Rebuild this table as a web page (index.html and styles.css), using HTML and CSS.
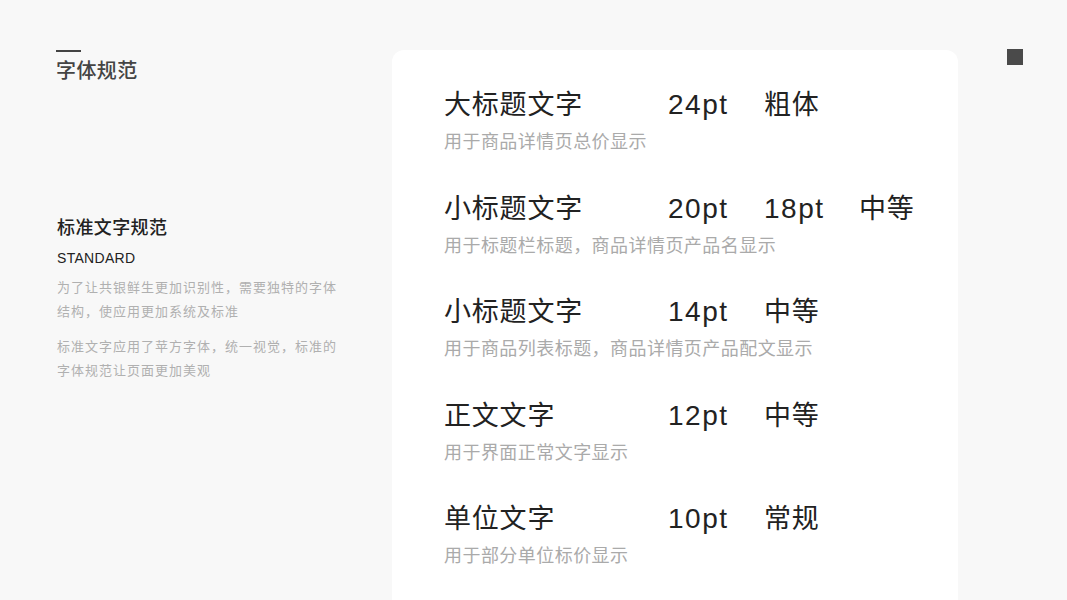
FILE: index.html
```html
<!DOCTYPE html>
<html lang="zh-CN">
<head>
<meta charset="utf-8">
<title>字体规范</title>
<link rel="stylesheet" href="styles.css">
</head>
<body>
<div class="page">
  <aside class="left">
    <div class="dash"></div>
    <h1 class="page-title">字体规范</h1>
    <h2 class="sec-title">标准文字规范</h2>
    <div class="sec-en">STANDARD</div>
    <p class="desc">为了让共银鲜生更加识别性，需要独特的字体结构，使应用更加系统及标准</p>
    <p class="desc">标准文字应用了苹方字体，统一视觉，标准的字体规范让页面更加美观</p>
  </aside>
  <main class="card">
    <div class="row">
      <div class="line">
        <span class="name">大标题文字</span>
        <span class="num">24pt</span>
        <span class="cell">粗体</span>
      </div>
      <div class="note">用于商品详情页总价显示</div>
    </div>
    <div class="row">
      <div class="line">
        <span class="name">小标题文字</span>
        <span class="num">20pt</span>
        <span class="num">18pt</span>
        <span class="cell">中等</span>
      </div>
      <div class="note">用于标题栏标题，商品详情页产品名显示</div>
    </div>
    <div class="row">
      <div class="line">
        <span class="name">小标题文字</span>
        <span class="num">14pt</span>
        <span class="cell">中等</span>
      </div>
      <div class="note">用于商品列表标题，商品详情页产品配文显示</div>
    </div>
    <div class="row">
      <div class="line">
        <span class="name">正文文字</span>
        <span class="num">12pt</span>
        <span class="cell">中等</span>
      </div>
      <div class="note">用于界面正常文字显示</div>
    </div>
    <div class="row">
      <div class="line">
        <span class="name">单位文字</span>
        <span class="num">10pt</span>
        <span class="cell">常规</span>
      </div>
      <div class="note">用于部分单位标价显示</div>
    </div>
  </main>
  <div class="corner">
    <div class="square"></div>
  </div>
</div>
</body>
</html>
```

FILE: styles.css
```css
* { box-sizing: border-box; }
html, body {
  margin: 0;
  padding: 0;
  height: 100%;
  overflow: hidden;
}
body {
  background: #f8f8f8;
  font-family: "Liberation Sans", "Noto Sans CJK SC", sans-serif;
  color: #222;
}
.page {
  display: flex;
  align-items: flex-start;
  padding-top: 49px;
  height: 600px;
}
.left {
  width: 392px;
  padding-left: 56px;
  flex: none;
}
.dash {
  width: 25px;
  height: 2px;
  margin-top: 1px;
  background: #444;
}
.page-title {
  margin: 5px 0 0;
  font-size: 20px;
  line-height: 28px;
  font-weight: 500;
  color: #444;
  letter-spacing: 0.4px;
}
.sec-title {
  margin: 130px 0 0 1px;
  font-size: 18px;
  line-height: 26px;
  font-weight: 500;
  color: #222;
  letter-spacing: 0.4px;
}
.sec-en {
  margin: 7px 0 0 1px;
  font-size: 14px;
  line-height: 20px;
  color: #222;
  letter-spacing: 0.3px;
}
.desc {
  margin: 8px 0 0 1px;
  width: 290px;
  font-size: 13px;
  line-height: 23.5px;
  letter-spacing: 1px;
  color: #b0b0b0;
}
.desc + .desc {
  margin-top: 12px;
}
.card {
  flex: none;
  width: 566px;
  height: 550px;
  margin-top: 1px;
  background: #fff;
  border-radius: 12px 12px 0 0;
  padding: 37px 0 0 52px;
  display: flex;
  flex-direction: column;
  gap: 35.5px;
}
.line {
  display: grid;
  grid-template-columns: 224px 96px 95px auto;
  align-items: baseline;
  font-size: 27px;
  line-height: 36px;
  color: #222;
}
.name, .cell {
  letter-spacing: 0.8px;
}
.num {
  letter-spacing: 1.5px;
  font-size: 28px;
  line-height: 34px;
}
.note {
  margin-top: 6px;
  font-size: 18px;
  line-height: 26px;
  letter-spacing: 0.45px;
  color: #aaa;
}
.corner {
  flex: none;
  padding-left: 49px;
}
.square {
  width: 16px;
  height: 16px;
  background: #4a4a4a;
}
```
